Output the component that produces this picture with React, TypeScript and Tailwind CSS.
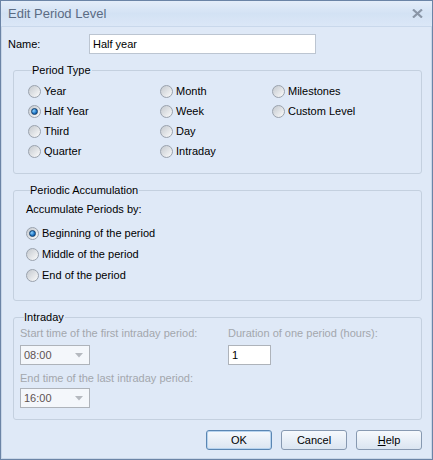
import { ReactNode } from 'react';

const FONT = "font-['Liberation_Sans',Arial,sans-serif]";

function Radio({ label, checked = false }: { label: string; checked?: boolean }) {
  return (
    <div className="flex items-center h-[20px]">
      <span className="w-[13px] h-[13px] rounded-full border border-[#9aa2ad] bg-linear-to-br from-[#c4c9cf] to-[#fbfbfb] flex items-center justify-center shrink-0">
        {checked && (
          <span className="w-[7px] h-[7px] rounded-full border border-[#123e6b] bg-[radial-gradient(circle_at_35%_35%,#8fd3ff,#1a72c4_60%,#0b4a8a)]" />
        )}
      </span>
      <span className="ml-[3px] text-black">{label}</span>
    </div>
  );
}

function Group({ title, children, className = '' }: { title: string; children: ReactNode; className?: string }) {
  return (
    <fieldset className={`border border-[#c4d0df] rounded-[3px] ${className}`}>
      <legend className="ml-[4px] pr-[1px] leading-[13px] text-black">{title}</legend>
      {children}
    </fieldset>
  );
}

function Combo({ value }: { value: string }) {
  return (
    <div className="w-[70px] h-[20px] border border-[#aeb3ba] bg-[#f4f7fb] flex items-center justify-between pl-[3px] pr-[6px]">
      <span className="text-[#5e5252]">{value}</span>
      <svg width="8" height="5" viewBox="0 0 8 5">
        <path d="M0 0 H8 L4 4.5 Z" fill="#b5b9bf" />
      </svg>
    </div>
  );
}

function DialogButton({ children, focused = false }: { children: ReactNode; focused?: boolean }) {
  return (
    <button
      className={`w-[66px] h-[20px] rounded-[3px] border bg-linear-to-b from-[#f6f9fd] to-[#dbe5f1] text-black flex items-center justify-center ${
        focused ? 'border-[#5a86b3] shadow-[inset_0_0_0_1px_#b7d3ee]' : 'border-[#8799b1]'
      }`}
    >
      {children}
    </button>
  );
}

export default function App() {
  return (
    <div className={`${FONT} text-[11px] w-[433px] h-[460px] flex flex-col border border-[#6b84a6] bg-[#dfe9f7]`}>
      {/* Title bar */}
      <div className="h-[26px] shrink-0 flex items-center justify-between pl-[7px] pr-[9px] bg-linear-to-b from-[#e4edf9] via-[#d3e2f4] to-[#dbe7f7] border-b border-[#c9d8eb]">
        <span className="text-[13px] text-[#5b6b83]">Edit Period Level</span>
        <svg width="11" height="9" viewBox="0 0 11 9">
          <path d="M1 0.5 L10 8.5 M10 0.5 L1 8.5" stroke="#8a96a7" strokeWidth="2.2" />
        </svg>
      </div>

      <div className="flex-1 flex flex-col pt-[7px] pl-[11px] pr-[9px] border-x border-b border-[#c8d6e8]">
        {/* Name */}
        <div className="flex items-center h-[20px] -ml-[5px]">
          <span className="w-[81px] text-black">Name:</span>
          <div className="w-[227px] h-[20px] bg-white border border-[#bcc5d1] flex items-center pl-[3px] text-black">
            Half year
          </div>
        </div>

        <Group title="Period Type" className="mt-[10px] pt-[4px] pb-[12px] pl-[14px]">
          <div className="flex">
            <div className="w-[132px] flex flex-col">
              <Radio label="Year" />
              <Radio label="Half Year" checked />
              <Radio label="Third" />
              <Radio label="Quarter" />
            </div>
            <div className="w-[112px] flex flex-col">
              <Radio label="Month" />
              <Radio label="Week" />
              <Radio label="Day" />
              <Radio label="Intraday" />
            </div>
            <div className="flex flex-col">
              <Radio label="Milestones" />
              <Radio label="Custom Level" />
            </div>
          </div>
        </Group>

        <Group title="Periodic Accumulation" className="mt-[10px] pt-[6px] pb-[15px] pl-[12px]">
          <div className="leading-[13px] text-black">Accumulate Periods by:</div>
          <div className="mt-[7px] flex flex-col gap-[1px]">
            <Radio label="Beginning of the period" checked />
            <Radio label="Middle of the period" />
            <Radio label="End of the period" />
          </div>
        </Group>

        <Group title="Intraday" className="mt-[10px] pt-[3px] pb-[11px] pl-[6px]">
          <div className="flex">
            <div className="w-[208px] flex flex-col">
              <span className="leading-[13px] text-[#a3a7ad]">Start time of the first intraday period:</span>
              <div className="mt-[5px]">
                <Combo value="08:00" />
              </div>
              <span className="mt-[7px] leading-[13px] text-[#a3a7ad]">End time of the last intraday period:</span>
              <div className="mt-[3px]">
                <Combo value="16:00" />
              </div>
            </div>
            <div className="flex flex-col">
              <span className="leading-[13px] text-[#a3a7ad]">Duration of one period (hours):</span>
              <div className="mt-[5px] w-[43px] h-[20px] bg-white border border-[#aeb3ba] flex items-center pl-[3px] text-black">
                1
              </div>
            </div>
          </div>
        </Group>

        {/* Dialog buttons */}
        <div className="mt-[10px] flex justify-end gap-[9px]">
          <DialogButton focused>OK</DialogButton>
          <DialogButton>Cancel</DialogButton>
          <DialogButton>
            <span>
              <span className="underline">H</span>elp
            </span>
          </DialogButton>
        </div>
      </div>
    </div>
  );
}
